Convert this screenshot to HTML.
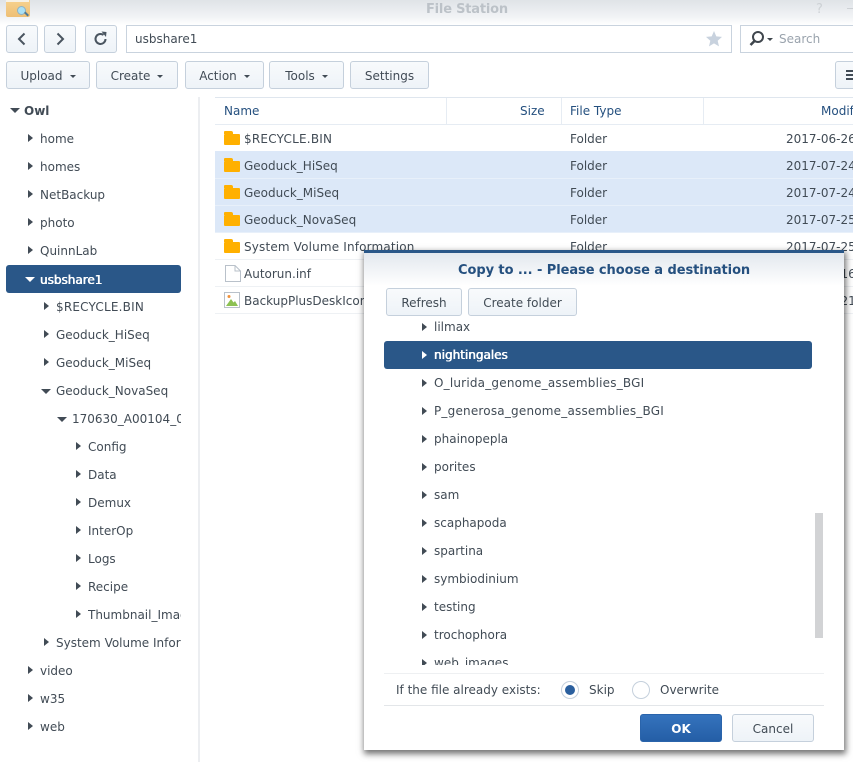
<!DOCTYPE html>
<html><head><meta charset="utf-8"><style>
html,body{margin:0;padding:0;background:#fff}
#r{position:relative;width:853px;height:762px;overflow:hidden;background:#fff;font:12px/16px "DejaVu Sans","Liberation Sans",sans-serif;color:#414b55}
#r div,#r span,#r svg{position:absolute}
.t{white-space:nowrap}
.b{box-sizing:border-box;height:28px;border:1px solid #c5d0dc;border-radius:3px;background:linear-gradient(#f8fafc,#eef3f8);text-align:center;line-height:28px;white-space:nowrap}
.ar{width:0;height:0;border-style:solid;border-width:4px 0 4px 5px;border-color:transparent transparent transparent #414b55}
.ad{width:0;height:0;border-style:solid;border-width:5px 5px 0 5px;border-color:#414b55 transparent transparent transparent}
.cr{display:inline-block;position:static!important;width:0;height:0;border-style:solid;border-width:3px 3px 0 3px;border-color:#414b55 transparent transparent transparent;vertical-align:2px;margin-left:7px}
.hd{color:#25507f}
.row{left:215px;width:638px;height:27px;border-bottom:1px solid #eef1f4;box-sizing:border-box}
.sel{background:#dce8f8;border-bottom:1px solid #e8f0fa}
.f{width:16px;height:11px;background:#ffb000;left:224px;border-radius:1px}
.f2{width:9px;height:3px;background:#ffb000;left:224px;border-radius:1px 2px 0 0}
.w{color:#fff;text-shadow:.4px 0 0 #fff,-.2px 0 0 #fff}
</style></head><body><div id="r">

<div style="left:0;top:0;width:853px;height:25px;background:linear-gradient(#dfe3e7,#f2f4f6 70%,#fff)"></div>
<div style="left:6px;top:0;width:24px;height:17px;background:linear-gradient(#f7d28e,#eebf75);border-radius:0 0 2px 2px"></div>
<div style="left:6px;top:0;width:23px;height:2px;background:#f7f2e6"></div>
<div style="left:17px;top:6px;width:9px;height:9px;border-radius:50%;background:#a9e0f5;border:1px solid #8fb2c2;box-sizing:border-box"></div>
<div style="left:24px;top:13px;width:5px;height:2px;background:#4f7a94;transform:rotate(45deg)"></div>
<div class="t" style="left:426px;top:2px;font-weight:bold;font-size:13px;color:#bcc2c8;letter-spacing:-.2px">File Station</div>
<div class="t" style="left:816px;top:2px;font-size:13px;color:#cdd1d5">?</div>
<div style="left:847px;top:8px;width:6px;height:1px;background:#cdd1d5"></div>

<div class="b" style="left:6px;top:25px;width:32px"></div>
<svg style="left:6px;top:25px" width="32" height="28"><path d="M18.5 8.5 L13 14 L18.5 19.5" fill="none" stroke="#4a5560" stroke-width="2"/></svg>
<div class="b" style="left:44px;top:25px;width:32px"></div>
<svg style="left:44px;top:25px" width="32" height="28"><path d="M13.5 8.5 L19 14 L13.5 19.5" fill="none" stroke="#4a5560" stroke-width="2"/></svg>
<div class="b" style="left:85px;top:25px;width:32px"></div>
<svg style="left:85px;top:25px" width="32" height="28"><path d="M20.5 14 A5 5 0 1 1 18.5 10" fill="none" stroke="#4a5560" stroke-width="2"/><path d="M16.5 6.5 L21.5 7 L21 12 Z" fill="#4a5560"/></svg>
<div style="left:126px;top:25px;width:606px;height:28px;box-sizing:border-box;border:1px solid #c9d3de;background:#fff"></div>
<div class="t" style="left:135px;top:31px">usbshare1</div>
<svg style="left:705px;top:30px" width="18" height="18"><path d="M9 1 L11.3 6.4 L17 6.9 L12.7 10.7 L14 16.4 L9 13.4 L4 16.4 L5.3 10.7 L1 6.9 L6.7 6.4 Z" fill="#c8d2de"/></svg>
<div style="left:740px;top:25px;width:120px;height:28px;box-sizing:border-box;border:1px solid #c9d3de;background:#fff"></div>
<svg style="left:748px;top:29px" width="28" height="20"><circle cx="10" cy="8" r="5" fill="none" stroke="#3f464d" stroke-width="2"/><path d="M6.5 12 L2.5 16" stroke="#3f464d" stroke-width="2.6"/><path d="M19 9 L25 9 L22 12 Z" fill="#3f464d"/></svg>
<div class="t" style="left:779px;top:31px;color:#9aa3ad">Search</div>

<div class="b" style="left:6px;top:61px;width:84px">Upload<span class="cr"></span></div>
<div class="b" style="left:96px;top:61px;width:82px">Create<span class="cr"></span></div>
<div class="b" style="left:185px;top:61px;width:79px">Action<span class="cr"></span></div>
<div class="b" style="left:269px;top:61px;width:75px">Tools<span class="cr"></span></div>
<div class="b" style="left:350px;top:61px;width:79px">Settings</div>
<div class="b" style="left:835px;top:61px;width:40px"></div>
<div style="left:846px;top:70px;width:7px;height:2px;background:#414b55"></div>
<div style="left:846px;top:74px;width:7px;height:2px;background:#414b55"></div>
<div style="left:846px;top:78px;width:7px;height:2px;background:#414b55"></div>

<div style="left:198px;top:97px;width:2px;height:665px;background:#eceef1"></div>

<div class="ad" style="left:10px;top:108px"></div>
<div class="t" style="left:24px;top:103px;font-weight:bold">Owl</div>
<div class="ar" style="left:28px;top:134px"></div><div class="t" style="left:40px;top:131px">home</div>
<div class="ar" style="left:28px;top:162px"></div><div class="t" style="left:40px;top:159px">homes</div>
<div class="ar" style="left:28px;top:190px"></div><div class="t" style="left:40px;top:187px">NetBackup</div>
<div class="ar" style="left:28px;top:218px"></div><div class="t" style="left:40px;top:215px">photo</div>
<div class="ar" style="left:28px;top:246px"></div><div class="t" style="left:40px;top:243px">QuinnLab</div>
<div style="left:6px;top:265px;width:175px;height:28px;background:#2a5788;border-radius:3px"></div>
<div class="ad" style="left:25px;top:277px;border-top-color:#fff"></div>
<div class="t w" style="left:40px;top:272px">usbshare1</div>
<div class="ar" style="left:44px;top:302px"></div><div class="t" style="left:56px;top:299px;letter-spacing:.2px">$RECYCLE.BIN</div>
<div class="ar" style="left:44px;top:330px"></div><div class="t" style="left:56px;top:327px">Geoduck_HiSeq</div>
<div class="ar" style="left:44px;top:358px"></div><div class="t" style="left:56px;top:355px">Geoduck_MiSeq</div>
<div class="ad" style="left:41px;top:389px"></div><div class="t" style="left:56px;top:383px">Geoduck_NovaSeq</div>
<div class="ad" style="left:57px;top:417px"></div>
<div style="left:72px;top:411px;width:109px;height:16px;overflow:hidden" class="t">170630_A00104_0061_BH</div>
<div class="ar" style="left:76px;top:442px"></div><div class="t" style="left:88px;top:439px">Config</div>
<div class="ar" style="left:76px;top:470px"></div><div class="t" style="left:88px;top:467px">Data</div>
<div class="ar" style="left:76px;top:498px"></div><div class="t" style="left:88px;top:495px">Demux</div>
<div class="ar" style="left:76px;top:526px"></div><div class="t" style="left:88px;top:523px">InterOp</div>
<div class="ar" style="left:76px;top:554px"></div><div class="t" style="left:88px;top:551px">Logs</div>
<div class="ar" style="left:76px;top:582px"></div><div class="t" style="left:88px;top:579px">Recipe</div>
<div class="ar" style="left:76px;top:610px"></div>
<div style="left:88px;top:607px;width:93px;height:16px;overflow:hidden" class="t">Thumbnail_Images</div>
<div class="ar" style="left:44px;top:638px"></div>
<div style="left:56px;top:635px;width:125px;height:16px;overflow:hidden" class="t">System Volume Information</div>
<div class="ar" style="left:28px;top:666px"></div><div class="t" style="left:40px;top:663px">video</div>
<div class="ar" style="left:28px;top:694px"></div><div class="t" style="left:40px;top:691px">w35</div>
<div class="ar" style="left:28px;top:722px"></div><div class="t" style="left:40px;top:719px">web</div>

<div style="left:215px;top:97px;width:638px;height:28px;box-sizing:border-box;border-top:1px solid #dfe6ee;border-bottom:1px solid #e6ecf3"></div>
<div style="left:446px;top:98px;width:1px;height:26px;background:#e6ecf3"></div>
<div style="left:561px;top:98px;width:1px;height:26px;background:#e6ecf3"></div>
<div style="left:703px;top:98px;width:1px;height:26px;background:#e6ecf3"></div>
<div class="t hd" style="left:224px;top:103px">Name</div>
<div class="t hd" style="left:520px;top:103px">Size</div>
<div class="t hd" style="left:570px;top:103px">File Type</div>
<div class="t hd" style="left:821px;top:103px">Modified</div>

<div class="row sel" style="top:151px;height:28px"></div>
<div class="row sel" style="top:179px"></div>
<div class="row sel" style="top:206px"></div>
<div class="row" style="top:233px"></div>
<div class="row" style="top:260px"></div>
<div class="row" style="top:287px"></div>

<div class="f2" style="top:131px"></div><div class="f" style="top:134px"></div>
<div class="f2" style="top:158px"></div><div class="f" style="top:161px"></div>
<div class="f2" style="top:185px"></div><div class="f" style="top:188px"></div>
<div class="f2" style="top:212px"></div><div class="f" style="top:215px"></div>
<div class="f2" style="top:239px"></div><div class="f" style="top:242px"></div>
<svg style="left:225px;top:265px" width="16" height="17"><path d="M.5.5H10L15.5 6V16.5H.5Z" fill="#fff" stroke="#b9c1ca"/><path d="M10 .5V6H15.5" fill="none" stroke="#b9c1ca"/></svg>
<svg style="left:224px;top:292px" width="17" height="17"><rect x=".5" y=".5" width="15" height="15" fill="#fff" stroke="#b9c1ca"/><circle cx="5" cy="4.5" r="1.5" fill="#f0913a"/><path d="M2 14L7 7L9.5 10.5L11 9L14 14Z" fill="#8cc152"/></svg>

<div class="t" style="left:244px;top:131px;letter-spacing:.22px">$RECYCLE.BIN</div>
<div class="t" style="left:244px;top:158px">Geoduck_HiSeq</div>
<div class="t" style="left:244px;top:185px">Geoduck_MiSeq</div>
<div class="t" style="left:244px;top:212px">Geoduck_NovaSeq</div>
<div class="t" style="left:244px;top:239px;letter-spacing:.16px">System Volume Information</div>
<div class="t" style="left:244px;top:266px">Autorun.inf</div>
<div class="t" style="left:244px;top:293px">BackupPlusDeskIcon.png</div>
<div class="t" style="left:570px;top:131px">Folder</div>
<div class="t" style="left:570px;top:158px">Folder</div>
<div class="t" style="left:570px;top:185px">Folder</div>
<div class="t" style="left:570px;top:212px">Folder</div>
<div class="t" style="left:570px;top:239px">Folder</div>
<div class="t" style="left:786px;top:131px">2017-06-26</div>
<div class="t" style="left:786px;top:158px">2017-07-24</div>
<div class="t" style="left:786px;top:185px">2017-07-24</div>
<div class="t" style="left:786px;top:212px">2017-07-25</div>
<div class="t" style="left:786px;top:239px">2017-07-25</div>
<div class="t" style="left:786px;top:266px">2013-10-16</div>
<div class="t" style="left:786px;top:293px">2013-10-21</div>

<div style="left:364px;top:250px;width:480px;height:500px;background:#fff;box-sizing:border-box;border-top:3px solid #2a5788;box-shadow:1px 3px 6px 1px rgba(0,0,0,.55)"></div>
<div style="left:364px;top:253px;width:480px;height:33px;background:linear-gradient(#e3e8ee,#fff)"></div>
<div class="t hd" style="left:458px;top:263px;font-weight:bold;font-size:13px;letter-spacing:-.07px">Copy to ... - Please choose a destination</div>
<div class="b" style="left:386px;top:288px;width:76px">Refresh</div>
<div class="b" style="left:468px;top:288px;width:109px">Create folder</div>

<div style="left:384px;top:318px;width:440px;height:347px;overflow:hidden">
<div class="ar" style="left:38px;top:5px"></div><div class="t" style="left:50px;top:1px">lilmax</div>
<div style="left:0;top:23px;width:428px;height:28px;background:#2a5788;border-radius:3px"></div>
<div class="ar" style="left:38px;top:33px;border-left-color:#fff"></div><div class="t w" style="left:50px;top:29px">nightingales</div>
<div class="ar" style="left:38px;top:61px"></div><div class="t" style="left:50px;top:57px;letter-spacing:.2px">O_lurida_genome_assemblies_BGI</div>
<div class="ar" style="left:38px;top:89px"></div><div class="t" style="left:50px;top:85px;letter-spacing:.2px">P_generosa_genome_assemblies_BGI</div>
<div class="ar" style="left:38px;top:117px"></div><div class="t" style="left:50px;top:113px">phainopepla</div>
<div class="ar" style="left:38px;top:145px"></div><div class="t" style="left:50px;top:141px">porites</div>
<div class="ar" style="left:38px;top:173px"></div><div class="t" style="left:50px;top:169px">sam</div>
<div class="ar" style="left:38px;top:201px"></div><div class="t" style="left:50px;top:197px">scaphapoda</div>
<div class="ar" style="left:38px;top:229px"></div><div class="t" style="left:50px;top:225px">spartina</div>
<div class="ar" style="left:38px;top:257px"></div><div class="t" style="left:50px;top:253px">symbiodinium</div>
<div class="ar" style="left:38px;top:285px"></div><div class="t" style="left:50px;top:281px">testing</div>
<div class="ar" style="left:38px;top:313px"></div><div class="t" style="left:50px;top:309px">trochophora</div>
<div class="ar" style="left:38px;top:341px"></div><div class="t" style="left:50px;top:337px">web_images</div>
</div>
<div style="left:815px;top:513px;width:8px;height:125px;background:#d2d3d5"></div>

<div style="left:384px;top:673px;width:440px;height:1px;background:#eef0f2"></div>
<div style="left:384px;top:705px;width:440px;height:1px;background:#e3e6e9"></div>
<div class="t" style="left:396px;top:682px">If the file already exists:</div>
<div style="left:561px;top:681px;width:18px;height:18px;box-sizing:border-box;border:1px solid #c5d0dc;border-radius:50%;background:#fff"></div>
<div style="left:565px;top:685px;width:10px;height:10px;border-radius:50%;background:#2a5f9e"></div>
<div class="t" style="left:589px;top:682px">Skip</div>
<div style="left:632px;top:681px;width:18px;height:18px;box-sizing:border-box;border:1px solid #c5d0dc;border-radius:50%;background:#fff"></div>
<div class="t" style="left:660px;top:682px">Overwrite</div>
<div class="b" style="left:640px;top:714px;width:82px;background:linear-gradient(#3573bd,#245ea6);border-color:#2a64ab;color:#fff;font-weight:bold">OK</div>
<div class="b" style="left:732px;top:714px;width:82px">Cancel</div>
</div></body></html>
